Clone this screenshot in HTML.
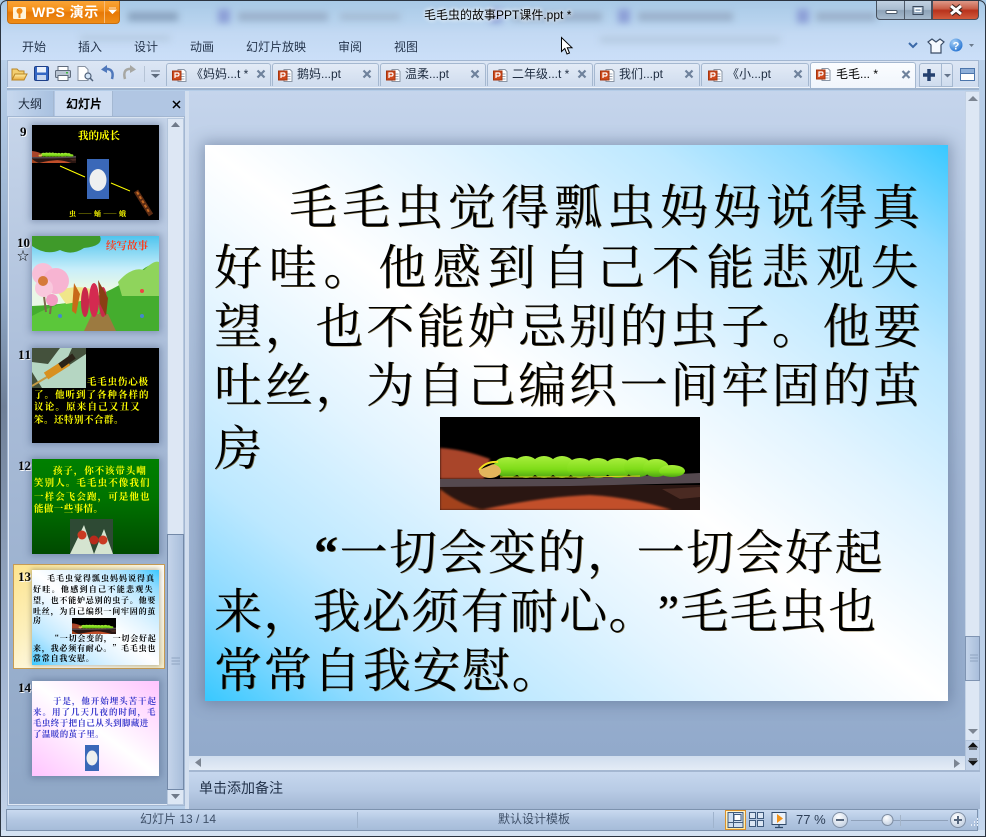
<!DOCTYPE html>
<html lang="zh"><head><meta charset="utf-8"><title>毛毛虫的故事PPT课件.ppt</title>
<style>
html,body{margin:0;padding:0;background:#b9cfe8}
#w{position:relative;width:986px;height:837px;overflow:hidden;font-family:"Liberation Sans","Noto Sans CJK SC",sans-serif;font-size:12px;color:#26364d;background:#b5cde8;text-spacing-trim:space-all;font-kerning:none}
#w div,#w span.a{position:absolute}
.t{white-space:nowrap;line-height:1}
.tab{top:63px;height:23px;background:linear-gradient(#e3ebf6,#cfdcee);border:1px solid #a5b8d0;border-bottom:0;border-radius:3px 3px 0 0;box-sizing:border-box}
.tt{top:68px;font-size:12px;color:#1e2c40}
.th{left:32px;width:127px;height:95px;overflow:hidden;box-shadow:0 0 7px 2px rgba(65,85,125,.42)}
.th svg{filter:blur(.35px)}
.n{font-family:"Liberation Serif",serif;font-weight:bold;font-size:13px;color:#000;text-shadow:1px 1px 0 #fff;line-height:1;white-space:nowrap}
.tl{font-family:"Noto Serif CJK SC",serif;font-weight:bold;white-space:nowrap;line-height:1;filter:blur(.25px)}
.y{color:#ff0;font-size:9.5px;left:2px}
.k{color:#000;font-size:8px;left:1px}
.b{color:#3a3acc;font-size:8.5px;left:1px}
.sl{font-family:"Liberation Serif","Noto Serif CJK SC",serif;font-size:48px;color:#000;white-space:nowrap;line-height:1;text-shadow:.7px .3px 0 rgba(110,85,30,.75);left:214px}
.q{font-weight:bold}
</style></head><body><div id="w">

<!-- blurred glass title -->
<div style="left:0;top:0;width:986px;height:62px;background:linear-gradient(#a8c9e6 0,#b7d3ee 22px,#c3d9f3 34px,#cbdff8 60px)"></div>
<div style="left:0;top:0;width:986px;height:60px;overflow:hidden;filter:blur(3.5px)">
<div style="left:128px;top:12px;width:50px;height:9px;background:#8aa3bf"></div>
<div style="left:218px;top:9px;width:12px;height:14px;background:#8c9ed6"></div>
<div style="left:238px;top:12px;width:90px;height:9px;background:#9ab0ca"></div>
<div style="left:340px;top:13px;width:60px;height:7px;background:#a4bad2"></div>
<div style="left:490px;top:9px;width:12px;height:14px;background:#8c9ed6"></div>
<div style="left:512px;top:12px;width:90px;height:9px;background:#9ab0ca"></div>
<div style="left:618px;top:9px;width:12px;height:14px;background:#8c9ed6"></div>
<div style="left:638px;top:12px;width:95px;height:9px;background:#9ab0ca"></div>
<div style="left:797px;top:9px;width:12px;height:14px;background:#8c9ed6"></div>
<div style="left:816px;top:12px;width:60px;height:9px;background:#9ab0ca"></div>
<div style="left:600px;top:36px;width:180px;height:7px;background:#b6cbe2"></div>
<div style="left:80px;top:35px;width:90px;height:6px;background:#b6cbe2"></div>
</div>
<!-- frame -->
<div style="left:0;top:0;width:984px;height:835px;border:1px solid #2b3440;border-radius:7px 7px 0 0;pointer-events:none;z-index:9"></div>
<div style="left:1px;top:60px;width:6px;height:770px;background:linear-gradient(#b9d0ea,#8fa8c7 30%,#6f8098 45%,#a3b6d2 80%,#c5d5ea)"></div>
<div style="left:979px;top:60px;width:6px;height:770px;background:linear-gradient(#b9d0ea,#aec4e0 40%,#c5d7ee)"></div>
<div style="left:1px;top:830px;width:984px;height:6px;background:#d5e3f3"></div>

<!-- WPS button -->
<div style="left:7px;top:0;width:113px;height:24px;background:linear-gradient(#f9a63a,#f58f17 45%,#e77806 55%,#ef8d17);border:1px solid #c76f10;border-top:0;border-radius:0 0 4px 4px;box-sizing:border-box"></div>
<div class="t" style="left:32px;top:5px;font-size:14px;font-weight:bold;color:#fff;letter-spacing:.5px">WPS 演示</div>
<div style="left:104px;top:1px;width:1px;height:22px;background:#f7bb78"></div>
<div class="t" style="left:424px;top:9px;color:#000;font-size:12px;text-shadow:0 0 5px #fff,0 0 5px #fff">毛毛虫的故事PPT课件.ppt *</div>

<!-- window buttons -->
<div style="left:876px;top:0;width:56px;height:20px;background:linear-gradient(#c3d3e3,#a9bccf 50%,#8ea3b8 55%,#a6bacd);border:1px solid #46505e;border-top:0;border-radius:0 0 0 4px;box-sizing:border-box"></div>
<div style="left:904px;top:0;width:1px;height:19px;background:#4f5a68"></div>
<div style="left:932px;top:0;width:47px;height:20px;background:linear-gradient(#e0a090,#c9604a 45%,#b8321c 55%,#d25b3d);border:1px solid #46505e;border-top:0;border-radius:0 0 4px 0;box-sizing:border-box"></div>

<!-- menu -->
<div class="t" style="left:22px;top:41px">开始</div>
<div class="t" style="left:78px;top:41px">插入</div>
<div class="t" style="left:134px;top:41px">设计</div>
<div class="t" style="left:190px;top:41px">动画</div>
<div class="t" style="left:246px;top:41px">幻灯片放映</div>
<div class="t" style="left:338px;top:41px">审阅</div>
<div class="t" style="left:394px;top:41px">视图</div>

<!-- toolbar row -->
<div style="left:7px;top:60px;width:972px;height:27px;background:linear-gradient(#dce6f4,#cfdcef);border:1px solid #a3b7d1;border-bottom:0;box-sizing:border-box"></div>
<div style="left:7px;top:87px;width:972px;height:1px;background:#eef3fa;border-bottom:2px solid #9fb4ce"></div>
<div class="tab" style="left:166px;width:105px"></div>
<div class="tab" style="left:272px;width:107px"></div>
<div class="tab" style="left:380px;width:106px"></div>
<div class="tab" style="left:487px;width:106px"></div>
<div class="tab" style="left:594px;width:106px"></div>
<div class="tab" style="left:701px;width:108px"></div>
<div class="tab" style="left:810px;width:106px;height:26px;top:62px;background:linear-gradient(#fbfdff,#f0f5fc)"></div>
<div class="tab" style="left:919px;width:34px;height:24px;border-bottom:1px solid #a5b8d0"></div>
<div style="left:941px;top:64px;width:1px;height:22px;background:#a5b8d0"></div>
<div class="t tt" style="left:191px">《妈妈...t *</div>
<div class="t tt" style="left:297px">鹅妈...pt</div>
<div class="t tt" style="left:405px">温柔...pt</div>
<div class="t tt" style="left:512px">二年级...t *</div>
<div class="t tt" style="left:619px">我们...pt</div>
<div class="t tt" style="left:727px">《小...pt</div>
<div class="t tt" style="left:836px;color:#000">毛毛... *</div>

<!-- left panel -->
<div style="left:7px;top:91px;width:178px;height:25px;background:#b1c6e3"></div>
<div style="left:7px;top:91px;width:47px;height:26px;background:linear-gradient(90deg,#c7d8ee,#a9c1e0);border-right:1px solid #a4b8d2;box-sizing:border-box"></div>
<div style="left:55px;top:91px;width:58px;height:26px;background:#cddcf1;border-right:1px solid #a4b8d2;box-sizing:border-box"></div>
<div class="t" style="left:18px;top:98px;color:#1d2a3d">大纲</div>
<div class="t" style="left:66px;top:98px;color:#000;font-weight:bold">幻灯片</div>
<div style="left:7px;top:116px;width:178px;height:690px;background:linear-gradient(#c6d5ea,#a9bcd8 40%,#8fa7c6);border:1px solid #a3b7d2;outline:1px solid #dfe8f4;outline-offset:-2px;box-sizing:border-box"></div>
<div style="left:185px;top:91px;width:4px;height:718px;background:#d3dfef"></div>
<!-- panel scrollbar -->
<div style="left:167px;top:118px;width:17px;height:687px;background:#dde7f4;border:1px solid #b7c8de;box-sizing:border-box"></div>
<div style="left:167px;top:534px;width:17px;height:256px;background:linear-gradient(90deg,#c4d4ea,#a9bedb);border:1px solid #7389a8;box-sizing:border-box"></div>

<!-- selected item -->
<div style="left:13px;top:564px;width:152px;height:105px;background:linear-gradient(135deg,#fde48e 0,#fdf0bc 30%,#fff 65%,#f6eecb);border:1px solid #c79c54;box-sizing:border-box"></div>

<!-- numbers -->
<div class="n" style="left:20px;top:125px">9</div>
<div class="n" style="left:17px;top:236px">10</div>
<div class="t" style="left:17px;top:250px;font-size:12px;color:#000">☆</div>
<div class="n" style="left:18px;top:348px">11</div>
<div class="n" style="left:18px;top:459px">12</div>
<div class="n" style="left:18px;top:570px">13</div>
<div class="n" style="left:18px;top:681px">14</div>

<!-- thumb 9 -->
<div class="th" style="top:125px;background:#000">
<svg width="127" height="95" style="position:absolute;left:0;top:0"><use href="#cat" x="0" y="20" width="44" height="18"/>
<rect x="55" y="34" width="22" height="40" fill="#3a68b8"/><ellipse cx="66" cy="55" rx="8.5" ry="11" fill="#eef0f0"/>
<path d="M28 41 53 52M79 58 98 66" stroke="#ff0" stroke-width="1"/>
<path d="M104 66 119 90" stroke="#5c2c14" stroke-width="5"/><path d="M105 67 117 87" stroke="#c46a24" stroke-width="2" stroke-dasharray="3 2"/></svg>
<div class="tl" style="left:46px;top:6px;font-size:10.5px;color:#ff0">我的成长</div>
<div class="tl" style="left:37px;top:86px;font-size:7px;letter-spacing:2px;color:#ff0">虫——蛹——蛾</div>
</div>
<!-- thumb 10 -->
<div class="th" style="top:236px;background:linear-gradient(#4fc4ee,#c8eefa 35%,#eaf8e6 55%)">
<svg width="127" height="95" style="position:absolute;left:0;top:0">
<path d="M0 0H68Q72 10 52 12 40 20 28 14 14 20 0 10Z" fill="#3f9a2a"/>
<path d="M0 95V70Q40 68 60 62 90 50 110 34 120 26 127 30V95Z" fill="#44ad2e"/>
<path d="M86 46Q100 30 112 34 122 24 127 26V60H90Z" fill="#8fd45c"/>
<path d="M0 80Q40 58 70 70L60 95H0Z" fill="#5bc73a"/>
<path d="M25 55Q50 46 70 58 58 64 34 68Z" fill="#f0e68a"/>
<path d="M12 60 14 76M20 60 18 78" stroke="#7d6a4c" stroke-width="2"/>
<circle cx="11" cy="38" r="11" fill="#f9bfd8"/><circle cx="24" cy="45" r="13" fill="#f7b4d2"/><circle cx="12" cy="52" r="9" fill="#f9c8dd"/><circle cx="20" cy="64" r="6" fill="#f39cc4"/><circle cx="11" cy="45" r="5" fill="#d57a3a"/>
<path d="M52 95 60 78H76L84 95Z" fill="#9c7a40"/>
<ellipse cx="53" cy="66" rx="4" ry="15" fill="#c9284a"/><ellipse cx="62" cy="64" rx="5" ry="17" fill="#d42a50"/><ellipse cx="71" cy="66" rx="4" ry="15" fill="#c9284a"/>
<path d="M42 47 48 58 44 78 40 75 41 60Z" fill="#c86a18"/><path d="M66 44 76 62 74 80 68 68Z" fill="#8a3f14"/>
<circle cx="110" cy="55" r="2" fill="#e44"/><circle cx="110" cy="80" r="2" fill="#48c"/><circle cx="28" cy="80" r="2" fill="#48c"/></svg>
<div class="tl" style="left:74px;top:5px;font-size:10.5px;color:#ff3a1a">续写故事</div>
</div>
<!-- thumb 11 -->
<div class="th" style="top:348px;background:#000">
<svg width="54" height="40" style="position:absolute;left:0;top:0"><rect width="54" height="40" fill="#b5d6c2"/><path d="M0 0 28 0 16 16 0 14ZM30 22 54 6V0H40ZM0 24 10 40H0Z" fill="#44513c"/><path d="M0 38 30 20" stroke="#c49a44" stroke-width="2"/><path d="M14 28 36 14" stroke="#d8901f" stroke-width="8"/><path d="M28 18 42 8" stroke="#2c2418" stroke-width="6"/></svg>
<div class="tl y" style="left:55px;top:29px;letter-spacing:.8px">毛毛虫伤心极</div>
<div class="tl y" style="top:42px;letter-spacing:1px">了。他听到了各种各样的</div>
<div class="tl y" style="top:54px;letter-spacing:1.2px">议论。原来自己又丑又</div>
<div class="tl y" style="top:67px;letter-spacing:.5px">笨。还特别不合群。</div>
</div>
<!-- thumb 12 -->
<div class="th" style="top:459px;background:linear-gradient(#008000,#007400 40%,#004a00)">
<svg width="43" height="35" style="position:absolute;left:38px;top:60px"><rect width="43" height="35" fill="#2e4a34"/><path d="M0 35 14 6 24 35ZM24 35 34 10 43 35Z" fill="#d5e4d0"/><circle cx="12" cy="16" r="4.5" fill="#c93a22"/><circle cx="24" cy="21" r="4.5" fill="#b82a1c"/><circle cx="33" cy="21" r="4.5" fill="#c93a22"/></svg>
<div class="tl y" style="left:21px;top:7px;letter-spacing:.9px">孩子，你不该带头嘲</div>
<div class="tl y" style="top:19px;letter-spacing:1.1px">笑别人。毛毛虫不像我们</div>
<div class="tl y" style="top:33px;letter-spacing:1.1px">一样会飞会跑，可是他也</div>
<div class="tl y" style="top:45px;letter-spacing:.4px">能做一些事情。</div>
</div>
<!-- thumb 13 -->
<div class="th" style="top:570px;background:linear-gradient(to top right,#38c8ff,#8cdaff 10%,#bce8ff 20%,#e2f4ff 35%,#fff 50%,#e2f4ff 65%,#bce8ff 80%,#8cdaff 90%,#38c8ff);box-shadow:0 0 5px 1px rgba(120,110,70,.5)">
<svg width="44" height="16" style="position:absolute;left:40px;top:48px"><use href="#cat" width="44" height="16"/></svg>
<div class="tl k" style="left:15px;top:5px;letter-spacing:1px">毛毛虫觉得瓢虫妈妈说得真</div>
<div class="tl k" style="top:16px;letter-spacing:1.3px">好哇。他感到自己不能悲观失</div>
<div class="tl k" style="top:27px;letter-spacing:.8px">望，也不能妒忌别的虫子。他要</div>
<div class="tl k" style="top:38px;letter-spacing:.8px">吐丝，为自己编织一间牢固的茧</div>
<div class="tl k" style="top:47px">房</div>
<div class="tl k" style="left:19px;top:65px;letter-spacing:.8px">“一切会变的，一切会好起</div>
<div class="tl k" style="top:75px;letter-spacing:.8px">来，我必须有耐心。”毛毛虫也</div>
<div class="tl k" style="top:85px;letter-spacing:.8px">常常自我安慰。</div>
</div>
<!-- thumb 14 -->
<div class="th" style="top:681px;background:linear-gradient(to top right,#ffc4ff,#fff 50%,#ffc4ff)">
<svg width="14" height="26" style="position:absolute;left:53px;top:64px"><rect width="14" height="26" fill="#3a68b8"/><ellipse cx="7" cy="13" rx="5.5" ry="7.5" fill="#eef0ee"/></svg>
<div class="tl b" style="left:21px;top:16px;letter-spacing:.95px">于是，他开始埋头苦干起</div>
<div class="tl b" style="top:27px;letter-spacing:1px">来。用了几天几夜的时间，毛</div>
<div class="tl b" style="top:38px;letter-spacing:.4px">毛虫终于把自己从头到脚藏进</div>
<div class="tl b" style="top:49px;letter-spacing:.4px">了温暖的茧子里。</div>
</div>

<!-- editor -->
<div style="left:189px;top:91px;width:776px;height:665px;background:linear-gradient(#c5d5ec,#b3c6e0 25%,#a1b6d4 60%,#92aacb)"></div>
<div style="left:205px;top:145px;width:743px;height:556px;box-shadow:0 0 14px 3px rgba(70,90,125,.45);background:linear-gradient(to top right,#38c8ff,#8cdaff 10%,#bce8ff 20%,#e2f4ff 35%,#fff 50%,#e2f4ff 65%,#bce8ff 80%,#8cdaff 90%,#38c8ff)"></div>
<div class="sl" style="left:289px;top:185px;letter-spacing:5px">毛毛虫觉得瓢虫妈妈说得真</div>
<div class="sl" style="top:245px;letter-spacing:6.7px">好哇。他感到自己不能悲观失</div>
<div class="sl" style="top:304px;letter-spacing:2.7px">望，也不能妒忌别的虫子。他要</div>
<div class="sl" style="top:363px;letter-spacing:2.7px">吐丝，为自己编织一间牢固的茧</div>
<div class="sl" style="top:426px">房</div>
<svg width="260" height="93" viewBox="0 0 260 93" style="position:absolute;left:440px;top:417px"><use href="#cat" width="260" height="93"/></svg>
<div class="sl" style="left:314px;top:530px;letter-spacing:1.5px"><span class="q">“</span>一切会变的，一切会好起</div>
<div class="sl" style="top:589px;letter-spacing:1.3px">来，我必须有耐心。”毛毛虫也</div>
<div class="sl" style="top:648px;letter-spacing:1.6px">常常自我安慰。</div>

<!-- right scrollbar -->
<div style="left:965px;top:91px;width:15px;height:650px;background:#dde7f4;border:1px solid #c3d2e5;box-sizing:border-box"></div>
<div style="left:965px;top:636px;width:15px;height:45px;background:linear-gradient(90deg,#c4d4ea,#a9bedb);border:1px solid #7f94b2;box-sizing:border-box"></div>
<div style="left:965px;top:740px;width:15px;height:31px;background:#c3d3e9;border:1px solid #b1c3da;box-sizing:border-box"></div>
<!-- h scrollbar -->
<div style="left:189px;top:756px;width:776px;height:14px;background:linear-gradient(#d0ddee,#e4ecf6)"></div>
<div style="left:189px;top:770px;width:791px;height:2px;background:#a4b7d1"></div>
<!-- notes -->
<div style="left:189px;top:772px;width:791px;height:37px;background:linear-gradient(#c6d7ee,#b8cbe5 50%,#a2b6d3)"></div>
<div class="t" style="left:199px;top:781px;font-size:14px;color:#22324a">单击添加备注</div>
<!-- status -->
<div style="left:6px;top:809px;width:972px;height:22px;background:linear-gradient(#c9daf0,#b3c7e2 50%,#a6bcd9);border:1px solid #7d92ae;box-sizing:border-box"></div>
<div style="left:357px;top:812px;width:1px;height:16px;background:#9fb3cd"></div>
<div style="left:713px;top:812px;width:1px;height:16px;background:#9fb3cd"></div>
<div class="t" style="left:140px;top:813px;color:#3f5068">幻灯片 13 / 14</div>
<div class="t" style="left:498px;top:813px;color:#3f5068">默认设计模板</div>
<div class="t" style="left:796px;top:813px;color:#2f4058;font-size:13px">77 %</div>
<div style="left:725px;top:810px;width:21px;height:20px;background:linear-gradient(#fff6cf,#ffe9a0);border:1px solid #d8902c;box-sizing:border-box"></div>

<!-- icon layer -->
<svg width="986" height="837" style="position:absolute;left:0;top:0;z-index:5" fill="none">
<defs>
<linearGradient id="leaf" x1="0" x2="0" y1="0" y2="1"><stop offset="0" stop-color="#a8ee3c"/><stop offset=".6" stop-color="#7fdc18"/><stop offset="1" stop-color="#4ea512"/></linearGradient>
<filter id="b1"><feGaussianBlur stdDeviation="1"/></filter>
<symbol id="cat" viewBox="0 0 260 93" preserveAspectRatio="none">
<rect width="260" height="93" fill="#000"/>
<path d="M0 31Q22 32 50 42L44 62H0Z" fill="#a9452c" filter="url(#b1)"/>
<path d="M0 68H260V93H0Z" fill="#2a1612"/>
<path d="M0 72Q20 88 44 93H0Z" fill="#a3431f" filter="url(#b1)"/>
<path d="M40 93Q100 80 150 78 190 80 232 93Z" fill="#c2502a" filter="url(#b1)"/>
<path d="M222 72 260 70V80L240 82Z" fill="#4a2a22"/>
<path d="M0 62 130 62 260 56V66L130 69 0 70Z" fill="#55494f"/>
<g fill="url(#leaf)">
<ellipse cx="68" cy="50" rx="15" ry="10"/><ellipse cx="86" cy="50" rx="13" ry="11"/><ellipse cx="104" cy="50" rx="13" ry="11"/><ellipse cx="122" cy="50" rx="13" ry="11"/><ellipse cx="140" cy="51" rx="13" ry="10"/><ellipse cx="158" cy="51" rx="13" ry="10"/><ellipse cx="178" cy="51" rx="14" ry="10"/><ellipse cx="198" cy="50" rx="14" ry="10"/><ellipse cx="216" cy="51" rx="13" ry="9"/><ellipse cx="232" cy="54" rx="13" ry="6"/>
</g>
<path d="M60 60H140L200 59" stroke="#d8d020" stroke-width="1"/>
<ellipse cx="50" cy="54" rx="11" ry="7" fill="#e3b55c"/>
<path d="M39 53Q46 44 58 45" stroke="#f0e020" stroke-width="2"/>
</symbol>
<radialGradient id="ball" cx=".35" cy=".3" r=".8"><stop offset="0" stop-color="#a6d0f7"/><stop offset="1" stop-color="#1f6fd0"/></radialGradient>
<symbol id="pi" viewBox="0 0 15 15"><path d="M6 1.500H12L14 3.500V13.500H6Z" fill="#fff" stroke="#8a96a6"/><path d="M9.500 6H12.500M9.500 8.500H12.500M9.500 11H12.500" stroke="#9aa6b6"/><rect x=".5" y="3" width="8.500" height="9" fill="#cf4a1d" stroke="#a5350f"/><path d="M3 10V5H5.800Q7 5 7 6.400T5.800 8H3" stroke="#fff" stroke-width="1.200"/></symbol>
<linearGradient id="fold" x1="0" x2="0" y1="0" y2="1"><stop offset="0" stop-color="#fff0a8"/><stop offset="1" stop-color="#e8a838"/></linearGradient>
<radialGradient id="circ" cx=".4" cy=".3" r=".8"><stop offset="0" stop-color="#fff"/><stop offset="1" stop-color="#bccbdf"/></radialGradient>
</defs>
<!-- logo -->
<rect x="13" y="7" width="13" height="12" rx="1" fill="#fff3d9"/><circle cx="19.500" cy="11" r="3" fill="#f08a14"/><path d="M19.500 13V18" stroke="#f08a14" stroke-width="2"/>
<path d="M109 10H116L112.500 13.500ZM109 8H116" fill="#fff" stroke="#fff" stroke-width=".8"/>
<!-- window glyphs -->
<rect x="886" y="10.500" width="11" height="3" rx="1" fill="#fff" stroke="#4a5868"/>
<rect x="913" y="6.500" width="10" height="8" fill="none" stroke="#39475a" stroke-width="1"/><rect x="915" y="8.500" width="6" height="3" stroke="#fff"/>
<path d="M951 6 961 14M961 6 951 14" stroke="#39231d" stroke-width="5"/><path d="M951 6 961 14M961 6 951 14" stroke="#fff" stroke-width="3"/>
<!-- right menu icons -->
<path d="M909 43 913 47 917 43" stroke="#3b69a8" stroke-width="2"/>
<path d="M932 39 928 42 931 45V53H941V45L944 42 940 39 936 42Z" fill="#f4f8fd" stroke="#3a4c66" stroke-width="1.200"/>
<circle cx="956" cy="45" r="6.500" fill="url(#ball)"/><text x="956" y="49.500" text-anchor="middle" font-size="11" font-weight="bold" fill="#fff" font-family="Liberation Sans">?</text>
<path d="M969 44H974L971.500 47Z" fill="#6b7a8c"/>
<!-- toolbar -->
<path d="M12 80V69H17L19 71H24V74" fill="#f3cf70" stroke="#b98524"/><path d="M12 80 15 74H27L24 80Z" fill="url(#fold)" stroke="#b98524"/>
<rect x="34.500" y="66.500" width="14" height="14" rx="1.500" fill="#3467c4" stroke="#1e3f88"/><rect x="37" y="67" width="9" height="5.500" fill="#e9f0fb"/><rect x="37" y="75" width="9" height="5" fill="#c7d6ee"/>
<rect x="58" y="66.500" width="10" height="4" fill="#fff" stroke="#5f6b7c"/><rect x="55.500" y="70.500" width="15" height="7" rx="1" fill="#b9c4d2" stroke="#5f6b7c"/><rect x="58" y="75.500" width="10" height="5" fill="#fff" stroke="#5f6b7c"/><rect x="66" y="72" width="2" height="1.500" fill="#3fb53f"/>
<path d="M78 66.500H85L88 69.500V80.500H78Z" fill="#fff" stroke="#8792a2"/><circle cx="88" cy="76" r="3" fill="#d5e6f8" stroke="#4f6078" stroke-width="1.200"/><path d="M90 78 93 81" stroke="#4f6078" stroke-width="1.500"/>
<path d="M112 79Q115 68 104 69" stroke="#4f78bb" stroke-width="2.500"/><path d="M107 65 101 69.500 107 73Z" fill="#4f78bb"/>
<path d="M125 79Q122 68 132 69" stroke="#a7a7a3" stroke-width="2.500"/><path d="M130 65 136 69.500 130 73Z" fill="#a7a7a3"/>
<path d="M144.500 66V82" stroke="#b6c4d6"/><path d="M151 71H160" stroke="#5d6a7c"/><path d="M151 74H160L155.500 78Z" fill="#5d6a7c"/>
<use href="#pi" x="172" y="68" width="15" height="15"/><use href="#pi" x="278" y="68" width="15" height="15"/><use href="#pi" x="386" y="68" width="15" height="15"/><use href="#pi" x="493" y="68" width="15" height="15"/><use href="#pi" x="600" y="68" width="15" height="15"/><use href="#pi" x="708" y="68" width="15" height="15"/><use href="#pi" x="816" y="67" width="15" height="15"/>
<!-- tab close -->
<g stroke="#6f829c" stroke-width="2.200">
<path d="M257.500 70.500 264.500 77.500M264.500 70.500 257.500 77.500"/><path d="M363.500 70.500 370.500 77.500M370.500 70.500 363.500 77.500"/><path d="M471.500 70.500 478.500 77.500M478.500 70.500 471.500 77.500"/><path d="M578.500 70.500 585.500 77.500M585.500 70.500 578.500 77.500"/><path d="M685.500 70.500 692.500 77.500M692.500 70.500 685.500 77.500"/><path d="M794.500 70.500 801.500 77.500M801.500 70.500 794.500 77.500"/><path d="M902.500 71 909.500 78M909.500 71 902.500 78"/>
</g>
<path d="M173 101 180 108M180 101 173 108" stroke="#000" stroke-width="1.500"/>
<path d="M923 75H935M929 69V81" stroke="#24406e" stroke-width="3.500"/><path d="M944 74H951L947.500 77.500Z" fill="#65748a"/>
<rect x="960.500" y="68.500" width="14" height="6" fill="#8fb0da" stroke="#4c75ab"/><rect x="960.500" y="73.500" width="14" height="7" fill="#fff" stroke="#4c75ab"/>
<!-- scroll arrows -->
<path d="M171 127H180L175.500 122Z" fill="#6f7a8a"/><path d="M171 794H180L175.500 799Z" fill="#6f7a8a"/>
<path d="M968 101H978L973 96Z" fill="#7c8592"/><path d="M968 729H978L973 734Z" fill="#7c8592"/>
<path d="M973 743 969 747H977ZM969 749H977" fill="#111" stroke="#111"/><path d="M969 759H977M969 761H977L973 765Z" fill="#111" stroke="#111"/>
<path d="M201 758V767L195 762.500Z" fill="#7c8592"/><path d="M954 759V768L960 763.500Z" fill="#7c8592"/>
<path d="M171.500 658H180M171.500 661H180M171.500 664H180" stroke="#8ea3c0"/>
<path d="M970 655H978M970 658H978M970 661H978" stroke="#8ea3c0"/>
<!-- status icons -->
<rect x="728" y="812.500" width="15" height="15" fill="#cfdff2" stroke="#3f5a7d"/><rect x="734" y="814.500" width="7" height="6" fill="#fff" stroke="#3f5a7d"/><path d="M733.500 812.500V827.500M728 822.500H743" stroke="#3f5a7d"/>
<g fill="#dbe6f4" stroke="#3f5a7d"><rect x="749.500" y="812.500" width="6" height="6"/><rect x="757.500" y="812.500" width="6" height="6"/><rect x="749.500" y="820.500" width="6" height="6"/><rect x="757.500" y="820.500" width="6" height="6"/></g>
<rect x="772" y="812.500" width="14" height="12" fill="#eaf1fa" stroke="#2f4968"/><path d="M777 814 783 818.500 777 823Z" fill="#f0921a"/><path d="M779 825V827M775 827.500H783" stroke="#2f4968" stroke-width="1.200"/>
<circle cx="840" cy="820" r="7.500" fill="url(#circ)" stroke="#7f8ea3"/><path d="M836 820H844" stroke="#55657c" stroke-width="2"/>
<path d="M851 820.500H948" stroke="#8fa1ba"/><path d="M900.500 815V826" stroke="#a4b4c8"/>
<circle cx="887.500" cy="820" r="5.500" fill="url(#circ)" stroke="#7f8ea3"/>
<circle cx="958" cy="820" r="7.500" fill="url(#circ)" stroke="#7f8ea3"/><path d="M954 820H962M958 816V824" stroke="#55657c" stroke-width="2"/>
<path d="M977 819h1M974 822h1M977 822h1M971 825h1M974 825h1M977 825h1" stroke="#e9eff8" stroke-width="2"/>
<!-- cursor -->
<path d="M561.500 37.500V51.500L564.800 48.500 567 54 569.500 53 567.300 47.700H572Z" fill="#fff" stroke="#000"/>
</svg>
</div></body></html>
